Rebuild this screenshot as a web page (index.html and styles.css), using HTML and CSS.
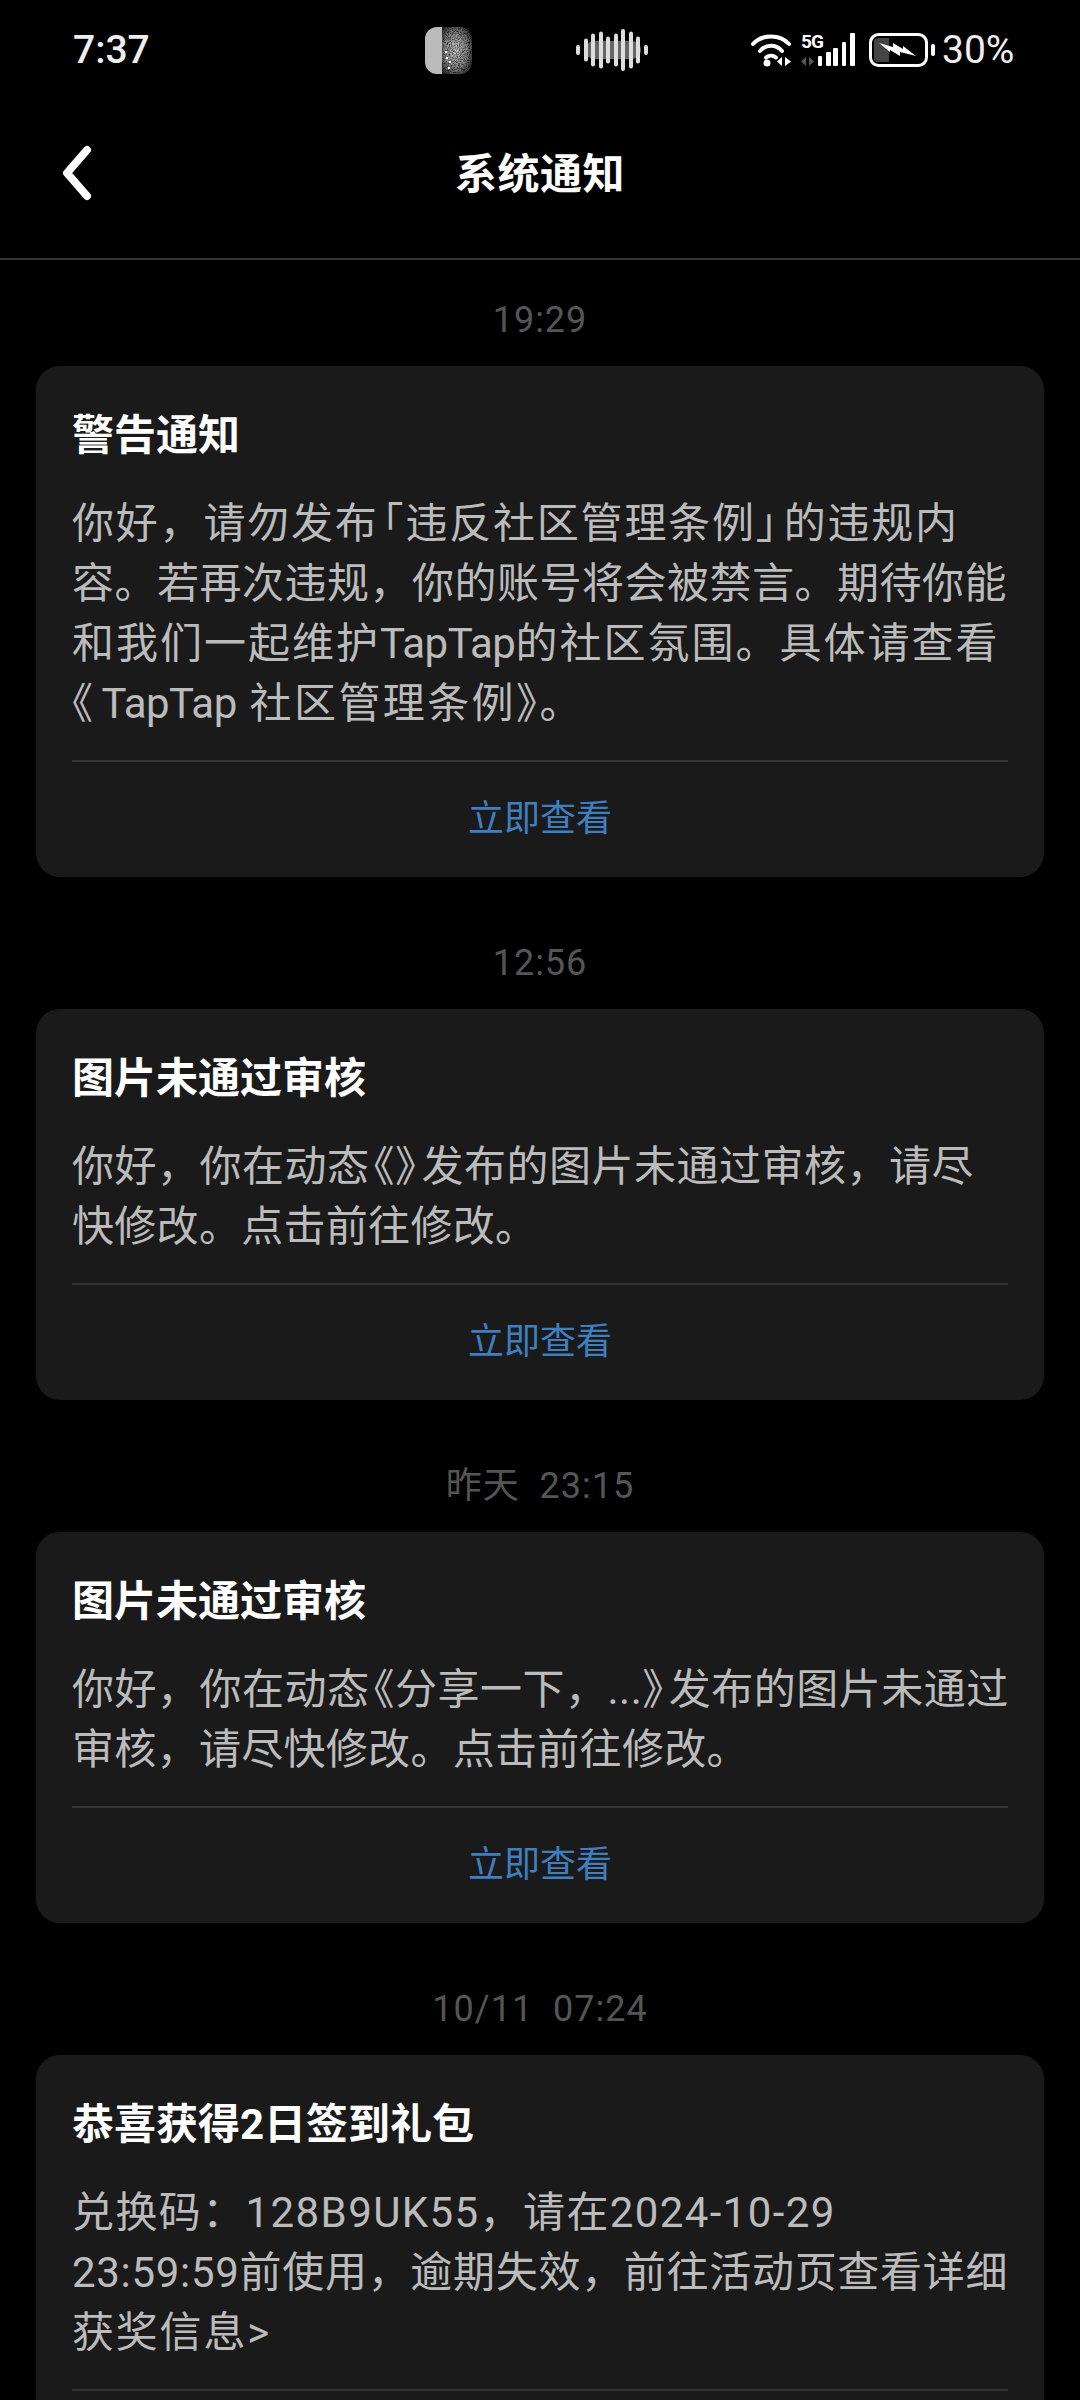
FILE: index.html
```html
<!DOCTYPE html>
<html lang="zh-CN">
<head>
    <meta charset="UTF-8">
    <meta name="viewport" content="width=device-width, initial-scale=1.0">
    <title>系统通知</title>
    <link rel="stylesheet" href="styles.css">
</head>
<body>

    <div class="status-bar">
        <span class="clock">7:37</span>
        <svg class="thumb" width="47" height="47" viewBox="0 0 47 47">
            <defs>
                <clipPath id="thumb-clip"><rect width="47" height="47" rx="12"/></clipPath>
                <radialGradient id="thumb-glow" cx="0.45" cy="0.5" r="0.6">
                    <stop offset="0" stop-color="#ccc"/>
                    <stop offset="0.6" stop-color="#888"/>
                    <stop offset="1" stop-color="#333"/>
                </radialGradient>
                <filter id="thumb-noise">
                    <feTurbulence type="fractalNoise" baseFrequency="0.9" numOctaves="2" seed="4"/>
                    <feColorMatrix values="0 0 0 0 0  0 0 0 0 0  0 0 0 0 0  0 0 0 -2 1.200"/>
                </filter>
            </defs>
            <g clip-path="url(#thumb-clip)">
                <rect x="17" width="30" height="47" fill="url(#thumb-glow)"/>
                <rect x="17" width="30" height="47" filter="url(#thumb-noise)"/>
                <rect width="17" height="47" fill="#bbb"/>
                <g fill="#fff">
                    <rect x="20" y="24" width="2" height="2"/>
                    <rect x="21" y="30" width="2" height="2"/>
                    <rect x="24" y="34" width="2" height="2"/>
                    <rect x="23" y="40" width="2" height="2"/>
                </g>
            </g>
        </svg>
        <svg class="wave" width="76" height="46" viewBox="0 0 76 46">
            <rect x="10" y="14" width="56" height="18" rx="9" fill="#666"/>
            <g fill="#ddd">
                <rect x="1" y="18" width="4" height="10" rx="2"/>
                <rect x="9" y="11.500" width="4" height="23" rx="2"/>
                <rect x="16" y="6.500" width="4" height="33" rx="2"/>
                <rect x="24" y="4.500" width="4" height="37" rx="2"/>
                <rect x="31" y="9.500" width="4" height="27" rx="2"/>
                <rect x="39" y="6.500" width="4" height="33" rx="2"/>
                <rect x="46" y="2" width="4" height="42" rx="2"/>
                <rect x="54" y="4.500" width="4" height="37" rx="2"/>
                <rect x="61" y="9.500" width="4" height="27" rx="2"/>
                <rect x="69" y="18" width="4" height="10" rx="2"/>
            </g>
        </svg>
        <div class="status-right">
            <svg class="wifi" width="42" height="34" viewBox="0 0 42 34">
                <g fill="none" stroke="#fff" stroke-width="4" stroke-linecap="round">
                    <path d="M2 11C11 1 29 1 38 11"/>
                    <path d="M9 18C15 11 25 11 31 18"/>
                    <path d="M15 24.500C18 22 22 22 25 24.500"/>
                </g>
                <circle cx="16" cy="30" r="3.500" fill="#fff"/>
                <path d="M31 24V33L26 28.500ZM34 24V33L40 28.500Z" fill="#fff"/>
            </svg>
            <div class="signal">
                <svg width="54" height="34" viewBox="0 0 54 34">
                    <path d="M5 24V33L0 28.500ZM8 24V33L13 28.500Z" fill="#555"/>
                    <rect x="17" y="23" width="4" height="10" rx="1" fill="#fff"/>
                    <rect x="25" y="19" width="5" height="14" rx="1" fill="#fff"/>
                    <rect x="32" y="15" width="5" height="18" rx="1" fill="#fff"/>
                    <rect x="41" y="9" width="4" height="24" rx="1" fill="#fff"/>
                    <rect x="49" y="0" width="5" height="33" rx="1" fill="#fff"/>
                </svg>
                <span class="five-g">5G</span>
            </div>
            <svg class="battery" width="66" height="34" viewBox="0 0 66 34">
                <rect x="1.500" y="1.500" width="56" height="31" rx="8" fill="none" stroke="#fff" stroke-width="3"/>
                <path d="M9 5H20V29H9Q5 29 5 25V9Q5 5 9 5Z" fill="#444"/>
                <path d="M10 10L24 14V10L34 16V13L47 23L31 19V23L21 17V19Z" fill="#fff"/>
                <rect x="62" y="11" width="4" height="12" rx="2" fill="#fff"/>
            </svg>
            <span class="percent">30%</span>
        </div>
    </div>

    <header class="nav">
        <svg class="back" width="32" height="56" viewBox="0 0 32 56">
            <path d="M26 5L6 28L26 51" fill="none" stroke="#fff" stroke-width="8" stroke-linecap="round" stroke-linejoin="round"/>
        </svg>
        <h1>系统通知</h1>
    </header>

    <main class="list">
        <div class="time">19:29</div>
        <section class="card">
            <h2>警告通知</h2>
            <p>
                <span class="line sp-18">你好，请勿发布<span class="half open">「</span>违反社区管理条例<span class="half close">」</span>的违规内</span>
                <span class="line sp-05">容。若再次违规，你的账号将会被禁言。期待你能</span>
                <span class="line sp-20">和我们一起维护<span class="tap">TapTap</span>的社区氛围。具体请查看</span>
                <span class="line sp-24"><span class="half book">《</span><span class="tap">TapTap</span> 社区管理条例<span class="half">》</span>。</span>
            </p>
            <a class="more">立即查看</a>
        </section>

        <div class="time">12:56</div>
        <section class="card">
            <h2>图片未通过审核</h2>
            <p>
                <span class="line sp-05">你好，你在动态<span class="half open">《</span><span class="half close">》</span>发布的图片未通过审核，请尽</span>
                <span class="line sp-03">快修改。点击前往修改。</span>
            </p>
            <a class="more">立即查看</a>
        </section>

        <div class="time">昨天&nbsp;&nbsp;23:15</div>
        <section class="card">
            <h2>图片未通过审核</h2>
            <p>
                <span class="line sp-05">你好，你在动态<span class="half open">《</span>分享一下，...<span class="half close">》</span>发布的图片未通过</span>
                <span class="line sp-03">审核，请尽快修改。点击前往修改。</span>
            </p>
            <a class="more">立即查看</a>
        </section>

        <div class="time">10/11&nbsp;&nbsp;07:24</div>
        <section class="card">
            <h2>恭喜获得2日签到礼包</h2>
            <p>
                <span class="line sp-14">兑换码：128B9UK55，请在2024-10-29</span>
                <span class="line sp-07">23:59:59前使用，逾期失效，前往活动页查看详细</span>
                <span class="line sp-18">获奖信息&gt;</span>
            </p>
            <a class="more"></a>
        </section>
    </main>

</body>
</html>
```

FILE: styles.css
```css
html, body { height: 2400px; overflow: hidden; }
body { margin: 0; background-color: #000; color: #fff; font-family: Roboto, "Noto Sans CJK SC", sans-serif; }

.status-bar { height: 100px; display: flex; align-items: center; padding-left: 73px; box-sizing: border-box; }
.clock { width: 352px; font-size: 39px; font-weight: 500; color: #eee; }
.wave { margin-left: 103px; }
.status-right { margin-left: 100px; display: flex; align-items: center; }
.wifi { margin-right: 8px; }
.signal { position: relative; width: 54px; height: 34px; margin-right: 14px; }
.signal svg { display: block; }
.five-g { position: absolute; left: 0; top: -1px; font-size: 19px; line-height: 20px; font-weight: 700; color: #fff; letter-spacing: -1px; }
.battery { margin-right: 7px; }
.percent { font-size: 39px; line-height: 40px; color: #eee; }

.nav { position: relative; height: 158px; border-bottom: 2px solid #333; display: flex; align-items: center; justify-content: center; margin-bottom: 10px; }
.back { position: absolute; left: 61px; top: 45px; }
.nav h1 { margin: 0 0 18px; font-size: 42px; letter-spacing: 0.5px; font-weight: 700; }

.list { padding: 0 36px; }
.time { height: 96px; line-height: 100px; text-align: center; font-size: 36px; letter-spacing: 1px; color: #555; }

.card { background-color: #1a1a1a; border-radius: 24px; padding: 40px 36px 0; margin-bottom: 36px; }
.card h2 { margin: 0 0 28px; font-size: 42px; line-height: 60px; font-weight: 700; color: #fff; }
.card p { margin: 0 0 26px; font-size: 42px; line-height: 60px; color: #bbb; white-space: nowrap; }
.line { display: block; }
.sp-03 { letter-spacing: 0.3px; }
.sp-05 { letter-spacing: 0.5px; }
.sp-07 { letter-spacing: 0.7px; }
.sp-14 { letter-spacing: 1.4px; }
.sp-18 { letter-spacing: 1.8px; }
.sp-20 { letter-spacing: 2px; }
.sp-24 { letter-spacing: 2.4px; }
.tap { letter-spacing: -0.5px; }

/* brackets take half an em in the app */
.half { font-feature-settings: "halt"; }
.half.open { margin-left: 4px; }
.half.close { margin-right: 5px; }
.half.book { margin-right: 6px; }

.more { display: block; height: 115px; line-height: 114px; border-top: 2px solid #333; text-align: center; font-size: 36px; color: #3f7fc0; }
```
